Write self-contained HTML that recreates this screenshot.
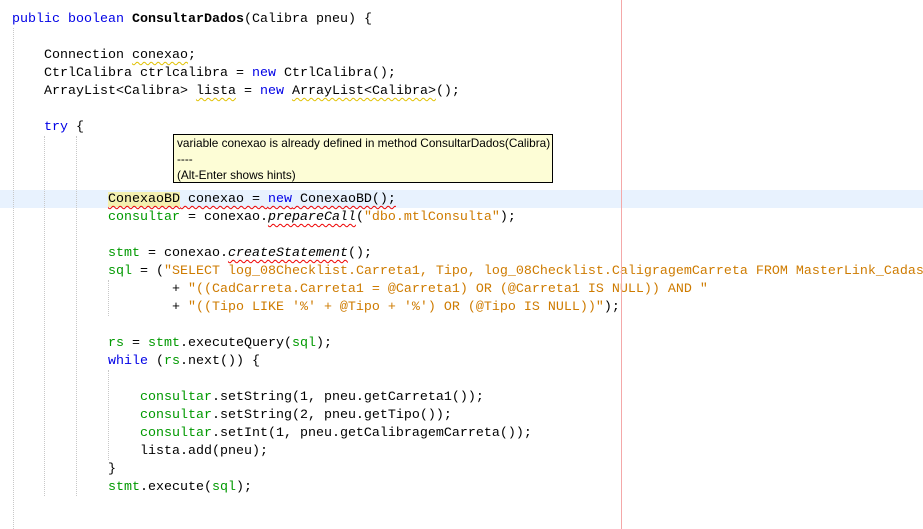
<!DOCTYPE html>
<html><head><meta charset="utf-8"><style>
body{margin:0;width:923px;height:529px;background:#fff;position:relative;overflow:hidden}
pre{margin:0;position:absolute;left:12px;top:11px;font-family:"Liberation Mono","Courier New",monospace;font-size:13.33px;line-height:18px;color:#000;z-index:2}
.k{color:#0000e6}.g{color:#009900}.s{color:#ce7b00}.b{font-weight:bold}
.w{text-decoration:underline wavy #e0c000;text-decoration-thickness:1px;text-underline-offset:3px}
.r{text-decoration:underline wavy #e00;text-decoration-thickness:1px;text-underline-offset:3px}
.i{font-style:italic}
.hl{position:absolute;left:0;top:190px;width:923px;height:18px;background:#e8f2fe;z-index:0}
.v{position:absolute;border-left:1px dotted #c8c8c8;z-index:1}
.red{position:absolute;left:621px;top:0;width:1px;height:529px;background:#f4a8a8;z-index:3}
.tip{position:absolute;left:173px;top:134px;width:380px;height:49px;background:#fdfdd6;border:1px solid #000;z-index:4;font-family:"Liberation Sans",sans-serif;font-size:11.8px;line-height:16px;padding:0 0 0 3px;box-sizing:border-box;white-space:nowrap;overflow:hidden}
.ye{background:#f4f0b0}
</style></head><body>
<div class="hl"></div>
<div class="v" style="left:13px;top:28px;height:501px"></div>
<div class="v" style="left:44px;top:136px;height:360px"></div>
<div class="v" style="left:76px;top:136px;height:360px"></div>
<div class="v" style="left:108px;top:280px;height:36px"></div>
<div class="v" style="left:108px;top:370px;height:90px"></div>
<pre><span class="k">public boolean</span> <span class="b">ConsultarDados</span>(Calibra pneu) {

    Connection <span class="w">conexao</span>;
    CtrlCalibra ctrlcalibra = <span class="k">new</span> CtrlCalibra();
    ArrayList&lt;Calibra&gt; <span class="w">lista</span> = <span class="k">new</span> <span class="w">ArrayList&lt;Calibra&gt;</span>();

    <span class="k">try</span> {



            <span class="r"><span class="ye">ConexaoBD</span> conexao = <span class="k">new</span> ConexaoBD();</span>
            <span class="g">consultar</span> = conexao.<span class="i r">prepareCall</span>(<span class="s">"dbo.mtlConsulta"</span>);

            <span class="g">stmt</span> = conexao.<span class="i r">createStatement</span>();
            <span class="g">sql</span> = (<span class="s">"SELECT log_08Checklist.Carreta1, Tipo, log_08Checklist.CaligragemCarreta FROM MasterLink_Cadas</span>
                    + <span class="s">"((CadCarreta.Carreta1 = @Carreta1) OR (@Carreta1 IS NULL)) AND "</span>
                    + <span class="s">"((Tipo LIKE '%' + @Tipo + '%') OR (@Tipo IS NULL))"</span>);

            <span class="g">rs</span> = <span class="g">stmt</span>.executeQuery(<span class="g">sql</span>);
            <span class="k">while</span> (<span class="g">rs</span>.next()) {

                <span class="g">consultar</span>.setString(1, pneu.getCarreta1());
                <span class="g">consultar</span>.setString(2, pneu.getTipo());
                <span class="g">consultar</span>.setInt(1, pneu.getCalibragemCarreta());
                lista.add(pneu);
            }
            <span class="g">stmt</span>.execute(<span class="g">sql</span>);
</pre>
<div class="tip">variable conexao is already defined in method ConsultarDados(Calibra)<br>----<br>(Alt-Enter shows hints)</div>
<div class="red"></div>
</body></html>
